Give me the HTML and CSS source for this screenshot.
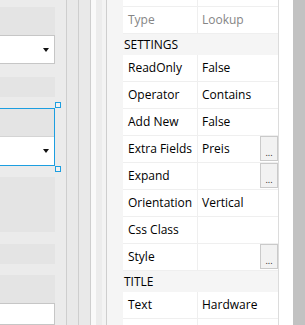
FILE: index.html
```html
<!DOCTYPE html>
<html lang="en">

<head>
    <meta charset="UTF-8">
    <title>Form designer</title>
    <link rel="stylesheet" href="styles.css">
</head>

<body>
    <div class="designer">
        <div class="block label"></div>
        <div class="select"><i class="arrow"></i></div>
        <div class="block short gap1"></div>
        <div class="picked">
            <div class="block inner"></div>
            <div class="select in"><i class="arrow"></i></div>
            <span class="handle top"></span>
            <span class="handle bottom"></span>
        </div>
        <div class="block tall"></div>
        <div class="block short"></div>
        <div class="block label gap2"></div>
        <div class="select last"></div>
    </div>

    <div class="rail"></div>
    <div class="rail"></div>
    <div class="splitter">
        <span class="s1"></span>
        <span class="s2"></span>
        <span class="s3"></span>
    </div>

    <div class="props">
        <div class="row first">
            <span class="name"></span>
            <span class="value"></span>
        </div>
        <div class="row muted">
            <span class="name">Type</span>
            <span class="value">Lookup</span>
        </div>
        <div class="cat">SETTINGS</div>
        <div class="row">
            <span class="name">ReadOnly</span>
            <span class="value">False</span>
        </div>
        <div class="row">
            <span class="name">Operator</span>
            <span class="value">Contains</span>
        </div>
        <div class="row">
            <span class="name">Add New</span>
            <span class="value">False</span>
        </div>
        <div class="row">
            <span class="name">Extra Fields</span>
            <span class="value">Preis<button class="dots">...</button></span>
        </div>
        <div class="row">
            <span class="name">Expand</span>
            <span class="value"><button class="dots">...</button></span>
        </div>
        <div class="row">
            <span class="name">Orientation</span>
            <span class="value">Vertical</span>
        </div>
        <div class="row">
            <span class="name">Css Class</span>
            <span class="value"></span>
        </div>
        <div class="row">
            <span class="name">Style</span>
            <span class="value"><button class="dots">...</button></span>
        </div>
        <div class="cat">TITLE</div>
        <div class="row">
            <span class="name">Text</span>
            <span class="value">Hardware</span>
        </div>
        <div class="row">
            <span class="name"></span>
            <span class="value"></span>
        </div>
    </div>

    <div class="blank"></div>
    <div class="scroll"></div>
</body>

</html>
```

FILE: styles.css
```css
html {
    overflow: hidden;
}

body {
    margin: 0;
    width: 305px;
    height: 325px;
    overflow: hidden;
    display: flex;
    background: #fff;
    font-family: "Open Sans", "Noto Sans", sans-serif;
    font-size: 12px;
    color: #000;
}

/* left design surface */
.designer {
    width: 55px;
    flex: none;
    padding: 7px 11px 0 0;
    background: #ebebeb;
}

.block {
    background: #e4e4e4;
}

.label {
    height: 28px;
}

.short {
    height: 20px;
}

.gap1 {
    margin: 13px 0 11px;
}

.tall {
    height: 55px;
    margin: 11px 0 12px;
}

.gap2 {
    margin-top: 11px;
}

.select {
    height: 27px;
    background: #fff;
    border: 1px solid #c6c6c6;
    border-left: none;
    display: flex;
    align-items: center;
    justify-content: flex-end;
    padding-right: 5px;
}

.select.last {
    height: 20px;
}

.arrow {
    width: 0;
    height: 0;
    border-left: 3.5px solid transparent;
    border-right: 3.5px solid transparent;
    border-top: 4px solid #111;
}

/* selected element with handles */
.picked {
    position: relative;
    height: 56px;
    border: 1px solid #1c9ee0;
    border-left: none;
}

.inner {
    height: 27px;
}

.picked .select.in {
    height: 28px;
    border: none;
    border-top: 1px solid #d4d4d4;
}

.handle {
    position: absolute;
    right: -7px;
    width: 4px;
    height: 4px;
    border: 1px solid #1c9ee0;
    background: #f2f2f2;
}

.handle.top {
    top: -7px;
}

.handle.bottom {
    bottom: -7px;
}

/* docked panel edges */
.rail {
    width: 11px;
    flex: none;
    background: #e9e9e9;
    border-left: 1px solid #cecece;
}

.splitter {
    flex: none;
    display: flex;
    border-left: 1px solid #cecece;
    border-right: 1px solid #cecece;
}

.s1 {
    width: 5px;
    background: #f9f9f9;
}

.s2 {
    width: 6px;
    background: #ececec;
}

.s3 {
    width: 4px;
    background: #f3f3f3;
}

/* property grid */
.props {
    width: 171px;
    flex: none;
    background: #f5f5f5;
    border-right: 1px solid #dcdcdc;
}

.row {
    display: flex;
    padding-left: 16px;
}

.row.first {
    margin-top: -20px;
}

.name,
.value {
    height: 26px;
    line-height: 26px;
    background: #fff;
    border-bottom: 1px solid #efefef;
    white-space: nowrap;
    overflow: hidden;
}

.name {
    width: 69px;
    padding-left: 5px;
    border-right: 1px solid #efefef;
}

.value {
    flex: 1;
    display: flex;
    padding-left: 4px;
}

.muted .name,
.muted .value {
    color: #858585;
}

.cat {
    height: 21px;
    line-height: 21px;
    padding-left: 17px;
}

.dots {
    margin: 0 0 0 auto;
    width: 18px;
    height: 25px;
    padding: 0 0 3px;
    border: 1px solid #cacaca;
    background: #f2f2f2;
    font-family: inherit;
    font-size: 9px;
    line-height: 9px;
    display: flex;
    align-items: flex-end;
    justify-content: center;
    color: #222;
}

.blank {
    width: 14px;
    flex: none;
}

.scroll {
    flex: 1;
    background: #c2c2c2;
}
```
